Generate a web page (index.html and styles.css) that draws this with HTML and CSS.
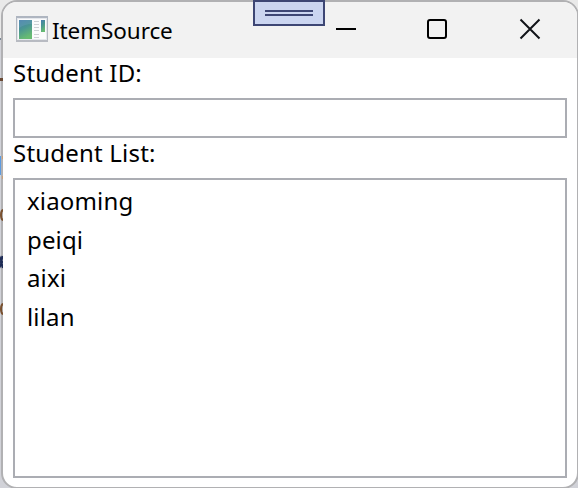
FILE: index.html
```
<!DOCTYPE html>
<html lang="en">
<head>
<meta charset="utf-8">
<title>ItemSource</title>
<link rel="stylesheet" href="styles.css">
</head>
<body>
<div class="desktop">
  <svg class="backdrop" width="578" height="488" viewBox="0 0 578 488" aria-hidden="true">
    <path fill="#e9e9e9" d="M0 0h578v38H0z"/>
    <path fill="#7b8795" d="M0 38h578v2H0z"/>
    <path fill="#5d9be0" d="M0 156h1v19H0z"/>
  </svg>
  <main class="window">
    <header class="titlebar">
      <svg class="app-icon" width="32" height="26" viewBox="0 0 32 26">
        <defs>
          <linearGradient id="pane" x1="0" y1="0" x2="0.35" y2="1"><stop offset="0" stop-color="#477daf"/><stop offset=".5" stop-color="#4a9692"/><stop offset="1" stop-color="#67bb72"/></linearGradient>
          <linearGradient id="frame" x1="0" y1="0" x2="0" y2="1"><stop offset="0" stop-color="#aeb5c0"/><stop offset="1" stop-color="#b8bbc2"/></linearGradient>
        </defs>
        <path fill="url(#frame)" d="M0 0h32v26H0z"/>
        <path fill="#e4e7ec" d="M1 2h30v22H1z"/>
        <path fill="#fbfbfc" d="M2 3h28v20H2z"/>
        <path fill="url(#pane)" d="M3 4h13v19H3z"/>
        <path fill="#70a4bd" opacity=".35" d="M3 4h13v4Q9 8 3 12z"/>
        <path stroke="#cdd0d4" d="M18 5.500h5M18 8.500h5M18 11.500h5M18 14.500h5M18 18.500h5M18 21.500h5"/>
        <path fill="url(#pane)" d="M25 4h4v12h-4z"/>
      </svg>
      <h1 class="title">ItemSource</h1>
      <div class="controls">
        <svg class="control" width="91" height="56" viewBox="0 0 91 56"><path d="M20 26h20v2H20z"/></svg>
        <svg class="control" width="91" height="56" viewBox="0 0 91 56"><rect x="21" y="18" width="18" height="18" rx="2" fill="none" stroke="#000" stroke-width="2"/></svg>
        <svg class="control" width="79" height="56" viewBox="0 0 79 56"><path fill="none" stroke="#111318" stroke-width="2" d="M22.500 17.500l19 19M41.500 17.500l-19 19"/></svg>
      </div>
    </header>
    <section class="form">
      <label class="label" for="student-id">Student ID:</label>
      <input class="field" id="student-id" type="text">
      <div class="label">Student List:</div>
      <ul class="list">
        <li class="item">xiaoming</li>
        <li class="item">peiqi</li>
        <li class="item">aixi</li>
        <li class="item">lilan</li>
      </ul>
    </section>
  </main>
  <svg class="backdrop" width="3" height="340" viewBox="0 0 3 340" aria-hidden="true">
    <path fill="#6a4a35" d="M0 78h3v3H0z"/>
    <g fill="none" stroke="#79502e" stroke-width="2"><path d="M3.500 210Q1 210 1 215T3.500 220M3.500 304Q1 304 1 309T3.500 314"/></g>
    <path fill="none" stroke="#1d2b55" stroke-width="2.200" d="M-1 256L2 262-1 268M2.500 256L1 262 3 268"/>
    <path fill="#c9a078" d="M2 156h1v3H2zM2 176h1v3H2z"/>
  </svg>
  <div class="tool-tab"><span class="grip"></span></div>
</div>
</body>
</html>
```

FILE: styles.css
```
* { box-sizing: border-box; }

body {
  margin: 0;
  overflow: hidden;
  font-family: "Noto Sans", "Open Sans", sans-serif;
  color: #000;
}

.desktop {
  position: relative;
  width: 578px;
  height: 488px;
  overflow: hidden;
  background: #d1d2d8;
}

.backdrop {
  position: absolute;
  top: 0;
  left: 0;
}

.window {
  position: relative;
  width: 578px;
  height: 489px;
  margin-left: 1px;
  border: 2px solid #b1b1b3;
  border-radius: 16px;
  overflow: hidden;
  background: #fff;
}

.titlebar {
  display: flex;
  align-items: center;
  height: 56px;
  padding-left: 13px;
  background: #f2f2f2;
}

.app-icon { margin-top: -3px; }

.title {
  margin: 2px 0 0 4px;
  font-size: 22.5px;
  font-weight: 400;
  line-height: 30px;
  letter-spacing: -0.1px;
}

.controls { display: flex; margin-left: auto; }
.control { display: block; }

.form {
  display: flex;
  flex-direction: column;
  padding: 0 10px;
}

.label {
  height: 40px;
  font-size: 24px;
  line-height: 30px;
  letter-spacing: 0.2px;
  white-space: nowrap;
}

.field {
  height: 40px;
  padding: 0 6px;
  border: 2px solid #abadb3;
  background: #fff;
  font: inherit;
  font-size: 24px;
  outline: none;
}

.list {
  height: 300px;
  margin: 0;
  padding: 2px 12px;
  border: 2px solid #abadb3;
  list-style: none;
}

.item {
  height: 38.500px;
  font-size: 24px;
  line-height: 38px;
  letter-spacing: 0.15px;
}

.tool-tab {
  position: absolute;
  top: 0;
  left: 253px;
  display: flex;
  justify-content: center;
  width: 72px;
  height: 26px;
  padding-top: 8px;
  border: 2px solid #3d4674;
  background: #cbd5f0;
}

.grip {
  width: 48px;
  height: 6px;
  border: solid #3d4674;
  border-width: 2px 0;
}
```
